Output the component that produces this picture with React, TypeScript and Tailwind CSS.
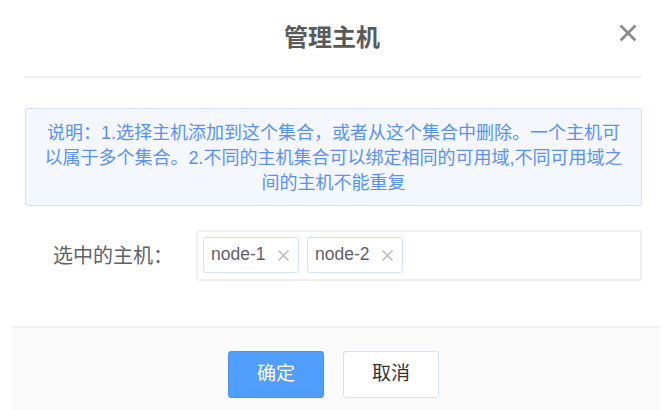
import React from "react";

const font = { fontFamily: '"Liberation Sans", "Noto Sans CJK SC", sans-serif' };

function CloseIcon() {
  return (
    <svg width="20" height="20" viewBox="0 0 20 20" aria-hidden="true">
      <path d="M2.5 2.5 L17.5 17.5 M17.5 2.5 L2.5 17.5" stroke="#8c8c8c" strokeWidth="2.8" strokeLinecap="butt" fill="none" />
    </svg>
  );
}

function TagX() {
  return (
    <svg width="13" height="13" viewBox="0 0 13 13" aria-hidden="true">
      <path d="M1.5 1.5 L11.5 11.5 M11.5 1.5 L1.5 11.5" stroke="#bdbdbd" strokeWidth="1.6" fill="none" />
    </svg>
  );
}

function Tag({ label }: { label: string }) {
  return (
    <div className="flex h-[36px] w-[96px] items-center rounded-[3px] border border-[#d3e2f6] bg-white pl-[7px] pr-[8px]">
      <span className="text-[17.5px] leading-none text-[#5f6166]">{label}</span>
      <span className="ml-auto flex items-center">
        <TagX />
      </span>
    </div>
  );
}

export default function App() {
  return (
    <div className="h-[410px] w-[670px] overflow-hidden bg-white" style={font}>
      <div className="ml-[11px] flex h-[410px] w-[649px] flex-col">
        {/* header */}
        <div className="pl-[13px] pr-[18px]">
          <div className="relative flex h-[76px] items-center justify-center pl-[2px] pr-[4px]">
            <span className="text-[24px] font-bold leading-none text-[#5a5a5a]">管理主机</span>
            <span className="absolute right-[4px] top-[23px] flex">
              <CloseIcon />
            </span>
          </div>
          <div className="h-[2px] w-[618px] bg-[#f0f0f0]" />
        </div>

        {/* body */}
        <div className="pl-[14px] pr-[18px] pt-[30px]">
          <div className="rounded-[3px] border border-[#d2e1f7] bg-[#f4f8fe] px-[14px] pb-[9px] pt-[12px] text-center text-[18px] leading-[25px] text-[#5b91f0]">
            <span className="block whitespace-nowrap">说明：1.选择主机添加到这个集合，或者从这个集合中删除。一个主机可</span>
            <span className="block whitespace-nowrap">以属于多个集合。2.不同的主机集合可以绑定相同的可用域,不同可用域之</span>
            <span className="block whitespace-nowrap">间的主机不能重复</span>
          </div>

          <div className="mt-[24px] flex items-center">
            <div className="w-[171px] pl-[28px] text-[20px] leading-none text-[#606266]">选中的主机：</div>
            <div className="flex h-[51px] flex-1 items-start gap-[8px] rounded-[3px] border-2 border-[#efefef] pl-[5px] pt-[5px]">
              <Tag label="node-1" />
              <Tag label="node-2" />
            </div>
          </div>
        </div>

        {/* footer */}
        <div className="mt-[45px] flex flex-1 justify-center gap-[19px] border-t-2 border-[#f0f0f0] bg-[#fafafa] pr-[4px] pt-[23px]">
          <button className="flex h-[47px] w-[96px] items-center justify-center rounded-[3px] border border-[#4a94f0] bg-[#509efd] text-[19px] text-white">
            确定
          </button>
          <button className="flex h-[47px] w-[96px] items-center justify-center rounded-[3px] border border-[#d6e1ef] bg-white text-[19px] text-[#333333]">
            取消
          </button>
        </div>
      </div>
    </div>
  );
}
